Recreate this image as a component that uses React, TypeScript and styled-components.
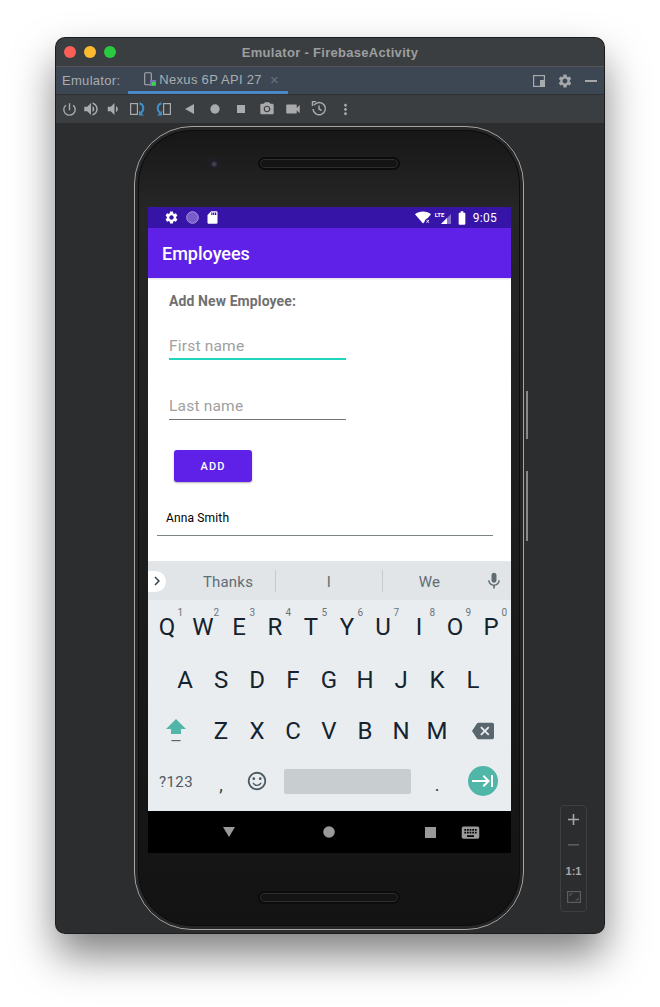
import React from 'react'
import styled, { createGlobalStyle } from 'styled-components'
import {
  MdBackspace,
  MdBatteryStd,
  MdCameraAlt,
  MdKeyboard,
  MdKeyboardTab,
  MdMic,
  MdMoreVert,
  MdPowerSettingsNew,
  MdSdCard,
  MdSettings,
  MdStop,
  MdVideocam,
  MdVolumeDown,
  MdVolumeUp,
  MdFiberManualRecord,
  MdOutlineSentimentSatisfied,
  MdChevronRight,
} from 'react-icons/md'

const GlobalStyle = createGlobalStyle`
  html, body {
    margin: 0;
    padding: 0;
    background: #ffffff;
  }
  body {
    font-family: Roboto, "Liberation Sans", sans-serif;
    overflow: hidden;
  }
`

const Page = styled.div`
  width: 660px;
  height: 1007px;
  padding: 38px 0 0 56px;
  box-sizing: border-box;
`

const EmulatorWindow = styled.div`
  width: 548px;
  height: 895px;
  border-radius: 9px;
  box-shadow: 0 0 0 1px #1c1c1c, 0 22px 42px rgba(0, 0, 0, 0.5);
  overflow: hidden;
  display: flex;
  flex-direction: column;
  background: #2c2d2f;
`

const TitleBar = styled.div`
  height: 28px;
  flex: none;
  background: #3b3e40;
  border-bottom: 1px solid #555757;
  display: flex;
  align-items: center;
  padding-left: 8px;
  position: relative;
`

const TrafficLight = styled.span<{ $color: string }>`
  width: 12px;
  height: 12px;
  border-radius: 50%;
  margin-right: 8px;
  background: ${(p) => p.$color};
`

const WindowTitle = styled.div`
  position: absolute;
  left: 0;
  right: 0;
  text-align: center;
  font-family: "Liberation Sans", sans-serif;
  font-size: 13px;
  font-weight: 700;
  letter-spacing: 0.3px;
  color: #9c9e9f;
`

const TabBar = styled.div`
  height: 27px;
  flex: none;
  background: #3c4753;
  border-bottom: 1px solid #2f3133;
  display: flex;
  align-items: center;
  padding-left: 6px;
  color: #a9adb1;
  font-family: "Liberation Sans", sans-serif;
  font-size: 13px;
  letter-spacing: 0.3px;
`

const Tab = styled.div`
  height: 27px;
  width: 160px;
  margin-left: 8px;
  box-sizing: border-box;
  border-bottom: 3px solid #4a88c7;
  display: flex;
  align-items: center;
  padding: 0 0 0 16px;
  gap: 3px;
`

const TabClose = styled.span`
  color: #6c7278;
  font-size: 15px;
  margin-left: 5px;
`

const TabActions = styled.div`
  margin-left: auto;
  display: flex;
  align-items: center;
  gap: 12px;
  padding-right: 7px;
  color: #a5a7a9;
`

const Toolbar = styled.div`
  height: 28px;
  flex: none;
  background: #3b3e40;
  display: flex;
  align-items: center;
  padding-left: 2px;
  color: #a8aaac;
`

const ToolSlot = styled.div<{ $w?: number }>`
  width: ${(p) => p.$w ?? 26}px;
  display: flex;
  justify-content: center;
  align-items: center;
`

const Stage = styled.div`
  flex: 1;
  position: relative;
  padding: 3px 0 0 78px;
  background: #2c2d2f;
`

const ZoomPanel = styled.div`
  position: absolute;
  left: 504px;
  top: 682px;
  width: 27px;
  height: 107px;
  box-sizing: border-box;
  border: 1px solid #3e3f41;
  border-radius: 4px;
  display: flex;
  flex-direction: column;
  align-items: center;
  color: #a8a8a8;
`

const ZoomItem = styled.div<{ $dim?: boolean }>`
  height: 26px;
  flex: none;
  display: flex;
  align-items: center;
  justify-content: center;
  color: ${(p) => (p.$dim ? '#5c5d5f' : '#a8a8a8')};
  font-family: "Liberation Sans", sans-serif;
  font-size: 11px;
  font-weight: 700;
`

const Phone = styled.div`
  position: relative;
  width: 390px;
  height: 804px;
  box-sizing: border-box;
  border-radius: 58px;
  border: 1px solid #a6a6a6;
  box-shadow: inset 0 0 0 3px #262626, inset 0 0 0 4px #0d0d0d;
  background: linear-gradient(180deg, #161616 0%, #262626 10%, #131313 100%);
  display: flex;
  flex-direction: column;
  align-items: center;
`

const SideButton = styled.div<{ $top: number; $height: number }>`
  position: absolute;
  right: -5px;
  top: ${(p) => p.$top}px;
  width: 2px;
  height: ${(p) => p.$height}px;
  background: #85878a;
`

const TopBezel = styled.div`
  width: 100%;
  height: 80px;
  flex: none;
  box-sizing: border-box;
  padding: 30px 0 0 72px;
  display: flex;
  align-items: flex-start;
`

const Camera = styled.div`
  width: 12px;
  height: 12px;
  margin-top: 0;
  border-radius: 50%;
  background: radial-gradient(circle at 60% 60%, #4a3d4c 0 12%, #1c1c26 35%, #222 100%);
`

const Speaker = styled.div<{ $offset?: number }>`
  width: 142px;
  height: 13px;
  margin-left: ${(p) => p.$offset ?? 0}px;
  box-sizing: border-box;
  border-radius: 7px;
  background: #141414;
  border: 2px solid #0c0c0c;
  box-shadow: inset 0 0 0 1px #2e2e2e;
`

const BottomBezel = styled.div`
  width: 100%;
  flex: 1;
  display: flex;
  justify-content: center;
  padding-top: 38px;
  box-sizing: border-box;
`

const Screen = styled.div`
  width: 363px;
  height: 646px;
  flex: none;
  margin-left: 1px;
  background: #ffffff;
  display: flex;
  flex-direction: column;
  overflow: hidden;
`

const StatusBar = styled.div`
  height: 21px;
  flex: none;
  background: #3614a7;
  color: #fff;
  display: flex;
  align-items: center;
  padding: 0 14px 0 16px;
`

const StatusIcon = styled.div<{ $mr?: number }>`
  display: flex;
  align-items: center;
  margin-right: ${(p) => p.$mr ?? 6}px;
`

const StatusRight = styled.div`
  margin-left: auto;
  display: flex;
  align-items: center;
`

const LteGroup = styled.div`
  position: relative;
  width: 16px;
  height: 13px;
  margin-right: 3px;
  display: flex;
  justify-content: flex-end;
  align-items: flex-end;
`

const LteLabel = styled.span`
  position: absolute;
  left: 0;
  top: 0;
  font-size: 6px;
  line-height: 7px;
  font-weight: 700;
`

const Clock = styled.span`
  font-size: 12px;
  margin-left: 3px;
  letter-spacing: 0.3px;
`

const AppBar = styled.div`
  height: 50px;
  flex: none;
  background: #5f21e8;
  color: #fff;
  display: flex;
  align-items: center;
  padding-left: 14px;
  font-size: 18px;
  font-weight: 500;
  box-shadow: 0 1px 2px rgba(0, 0, 0, 0.15);
  z-index: 1;
`

const Content = styled.div`
  height: 283px;
  flex: none;
  padding-left: 9px;
  box-sizing: border-box;
  overflow: hidden;
`

const FormHeading = styled.div`
  margin: 15px 0 0 12px;
  height: 16px;
  line-height: 16px;
  font-size: 14px;
  font-weight: 700;
  letter-spacing: 0.1px;
  color: #707070;
`

const Field = styled.div<{ $focused?: boolean }>`
  width: 177px;
  margin: ${(p) => (p.$focused ? 22 : 31)}px 0 0 12px;
  height: 29px;
  box-sizing: border-box;
  line-height: 31px;
  font-size: 15.5px;
  letter-spacing: 0.2px;
  color: #a0a0a0;
  border-bottom: ${(p) => (p.$focused ? '2px solid #1fd6bc' : '1px solid #747474')};
`

const AddButton = styled.button`
  display: block;
  width: 78px;
  height: 32px;
  margin: 30px 0 0 17px;
  padding: 0;
  border: 0;
  border-radius: 3px;
  background: #5f21e8;
  color: #fff;
  font-family: Roboto, sans-serif;
  font-size: 11px;
  font-weight: 500;
  letter-spacing: 1.1px;
  box-shadow: 0 1px 2px rgba(0, 0, 0, 0.3);
`

const EmployeeName = styled.div`
  margin: 28px 0 0 9px;
  height: 16px;
  line-height: 16px;
  font-size: 12px;
  letter-spacing: 0.15px;
  color: #000;
`

const Divider = styled.div`
  width: 336px;
  height: 1px;
  margin-top: 9px;
  background: #7d8488;
`

const Keyboard = styled.div`
  flex: 1;
  background: #e9edf0;
  display: flex;
  flex-direction: column;
  border-top: 1px solid #e4e6e8;
`

const Suggestions = styled.div`
  height: 38px;
  flex: none;
  background: #e1e5e8;
  display: flex;
  align-items: center;
  color: #5f6c74;
  font-size: 15px;
  letter-spacing: 0.2px;
`

const ExpandPill = styled.div`
  width: 18px;
  height: 21px;
  margin-right: 15px;
  background: #fff;
  border-radius: 0 11px 11px 0;
  display: flex;
  align-items: center;
  color: #3a454c;
`

const Suggestion = styled.div<{ $w: number; $divided?: boolean }>`
  width: ${(p) => p.$w}px;
  height: 22px;
  line-height: 24px;
  text-align: center;
  box-sizing: border-box;
  border-left: ${(p) => (p.$divided ? '1px solid #c4cace' : '0')};
`

const MicSlot = styled.div`
  width: 35px;
  display: flex;
  justify-content: center;
  color: #5f6c74;
`

const KeyRow = styled.div<{ $h: number; $pad?: number }>`
  height: ${(p) => p.$h}px;
  flex: none;
  display: flex;
  align-items: center;
  padding-left: ${(p) => p.$pad ?? 0}px;
`

const Key = styled.div<{ $w?: number }>`
  position: relative;
  width: ${(p) => p.$w ?? 36}px;
  height: 100%;
  flex: none;
  display: flex;
  align-items: center;
  justify-content: center;
  font-size: 24px;
  color: #14232e;
`

const KeyHint = styled.span`
  position: absolute;
  top: 8px;
  right: 2px;
  font-size: 10px;
  line-height: 10px;
  color: #6a747b;
`

const FnKey = styled(Key)`
  font-size: 15px;
  letter-spacing: 0.4px;
  color: #4d5a62;
`

const SymbolsLabel = styled.span`
  margin: 2px 0 0 1px;
`

const PunctKey = styled(Key)`
  font-size: 18px;
  padding-top: 6px;
  box-sizing: border-box;
  color: #2f3d46;
`

const SpaceBar = styled.div`
  width: 127px;
  height: 25px;
  flex: none;
  margin: 0 8px 0 9px;
  border-radius: 2px;
  background: #c8cdd0;
`

const EnterButton = styled.div`
  width: 30px;
  height: 30px;
  border-radius: 50%;
  background: #4fb6a8;
  color: #fff;
  display: flex;
  align-items: center;
  justify-content: center;
`

const NavBar = styled.div`
  flex: none;
  height: 42px;
  background: #000;
  display: flex;
  align-items: center;
  color: #9a9a9a;
`

const NavSlot = styled.div<{ $left: number }>`
  width: 24px;
  flex: none;
  margin-left: ${(p) => p.$left}px;
  display: flex;
  justify-content: center;
`

const firstRow: [string, string][] = [
  ['Q', '1'], ['W', '2'], ['E', '3'], ['R', '4'], ['T', '5'],
  ['Y', '6'], ['U', '7'], ['I', '8'], ['O', '9'], ['P', '0'],
]
const secondRow = 'ASDFGHJKL'.split('')
const thirdRow = 'ZXCVBNM'.split('')

const RotateIcon: React.FC<{ flip?: boolean }> = ({ flip }) => (
  <svg width="15" height="14" viewBox="0 0 15 14" style={flip ? { transform: 'scaleX(-1)' } : undefined}>
    <rect x="0.6" y="1.6" width="6.8" height="10.800" fill="none" stroke="#a8aaac" strokeWidth="1.2" />
    <path d="M9.500 1.300c4.500 1.200 5 6.500 1.500 9.500" fill="none" stroke="#3d8fc9" strokeWidth="2" />
    <path d="M9 8.500v5h5z" fill="#3d8fc9" />
  </svg>
)

const SnapshotIcon = () => (
  <svg width="16" height="16" viewBox="0 0 16 16" fill="none" stroke="#a8aaac" strokeWidth="1.5">
    <path d="M3 4.2A6.2 6.2 0 1 1 2 8" />
    <path d="M1 1.5h4.5V5" transform="rotate(-90 3 3)" />
    <path d="M8 4.5V8l2.5 1.5" />
  </svg>
)

const BackTriangle = () => (
  <svg width="12" height="12" viewBox="0 0 12 12">
    <path d="M0 1h12L6 11z" fill="currentColor" />
  </svg>
)

const HomeDot = () => (
  <svg width="12" height="12" viewBox="0 0 12 12">
    <circle cx="6" cy="6" r="5.800" fill="currentColor" />
  </svg>
)

const TabDeviceIcon = () => (
  <svg width="12" height="14" viewBox="0 0 12 14">
    <rect x="0.7" y="0.7" width="6.6" height="12" rx="1" fill="none" stroke="#a9adb1" strokeWidth="1.1" />
    <rect x="6" y="8" width="6" height="6" fill="#7b6fb5" />
    <rect x="8" y="10" width="3.5" height="3.5" fill="#30e040" />
  </svg>
)

const ShiftIcon = () => (
  <svg width="22" height="26" viewBox="0 0 22 26">
    <path d="M11 1l10 10h-5v5H6v-5H1z" fill="#4fb6a8" />
    <rect x="6.5" y="22" width="9" height="1.2" fill="#5a666e" />
  </svg>
)

const WifiOffIcon = () => (
  <svg width="16" height="13" viewBox="0 0 16 13">
    <path d="M0 3.2C2 1.6 5 .5 8 .5s6 1.1 8 2.7L8 12.5z" fill="#fff" />
    <path d="M10.6 8.6l3.4 3.4m0-3.4l-3.4 3.4" stroke="#3614a7" strokeWidth="3" />
    <path d="M11.5 9l2.4 2.8m0-2.8l-2.4 2.8" stroke="#fff" strokeWidth="0.9" />
  </svg>
)

const SignalIcon = () => (
  <svg width="10" height="10" viewBox="0 0 10 10">
    <path d="M0 10L10 0v10z" fill="#fff" opacity="0.4" />
    <path d="M0 10l6-6v6z" fill="#fff" />
  </svg>
)

const LoaderDot = () => (
  <svg width="13" height="13" viewBox="0 0 13 13">
    <circle cx="6.500" cy="6.500" r="5.800" fill="#7a5cc8" stroke="#a797dc" strokeWidth="1" />
  </svg>
)

const CompactIcon = () => (
  <svg width="12" height="12" viewBox="0 0 12 12">
    <rect x="0.6" y="0.6" width="10.800" height="10.800" fill="none" stroke="#a8aaac" strokeWidth="1.2" />
    <rect x="7" y="5" width="4.500" height="6.500" fill="#a8aaac" />
  </svg>
)

const FitIcon = () => (
  <svg width="14" height="12" viewBox="0 0 14 12" fill="none" stroke="#5c5d5f" strokeWidth="1">
    <rect x="0.5" y="0.5" width="13" height="11" strokeWidth="1.4" />
    <path d="M3 5V3h2.5M11 7v2H8.500" />
  </svg>
)

const App: React.FC<{}> = () => {
  return (
    <Page>
      <GlobalStyle />
      <EmulatorWindow>
        <TitleBar>
          <TrafficLight $color="#fb5f57" />
          <TrafficLight $color="#fcba2f" />
          <TrafficLight $color="#2ac940" />
          <WindowTitle>Emulator - FirebaseActivity</WindowTitle>
        </TitleBar>
        <TabBar>
          Emulator:
          <Tab>
            <TabDeviceIcon />
            Nexus 6P API 27
            <TabClose>×</TabClose>
          </Tab>
          <TabActions>
            <CompactIcon />
            <MdSettings size={16} />
            <svg width="12" height="2" viewBox="0 0 12 2"><rect width="12" height="2" fill="#a5a7a9" /></svg>
          </TabActions>
        </TabBar>
        <Toolbar>
          <ToolSlot $w={22}><MdPowerSettingsNew size={17} /></ToolSlot>
          <ToolSlot $w={22}><MdVolumeUp size={18} /></ToolSlot>
          <ToolSlot $w={22}><MdVolumeDown size={18} /></ToolSlot>
          <ToolSlot><RotateIcon /></ToolSlot>
          <ToolSlot><RotateIcon flip /></ToolSlot>
          <ToolSlot>
            <svg width="9" height="10" viewBox="0 0 9 10"><path d="M9 0v10L0 5z" fill="#a8aaac" /></svg>
          </ToolSlot>
          <ToolSlot><MdFiberManualRecord size={14} /></ToolSlot>
          <ToolSlot><MdStop size={16} /></ToolSlot>
          <ToolSlot><MdCameraAlt size={16} /></ToolSlot>
          <ToolSlot><MdVideocam size={18} /></ToolSlot>
          <ToolSlot><SnapshotIcon /></ToolSlot>
          <ToolSlot><MdMoreVert size={17} /></ToolSlot>
        </Toolbar>
        <Stage>
          <Phone>
            <SideButton $top={264} $height={48} />
            <SideButton $top={344} $height={70} />
            <TopBezel>
              <Camera />
              <Speaker $offset={39} />
            </TopBezel>
            <Screen>
              <StatusBar>
                <StatusIcon $mr={7}><MdSettings size={15} /></StatusIcon>
                <StatusIcon $mr={6}><LoaderDot /></StatusIcon>
                <StatusIcon><MdSdCard size={15} /></StatusIcon>
                <StatusRight>
                  <StatusIcon $mr={4}><WifiOffIcon /></StatusIcon>
                  <LteGroup>
                    <LteLabel>LTE</LteLabel>
                    <SignalIcon />
                  </LteGroup>
                  <StatusIcon $mr={0}><MdBatteryStd size={16} /></StatusIcon>
                  <Clock>9:05</Clock>
                </StatusRight>
              </StatusBar>
              <AppBar>Employees</AppBar>
              <Content>
                <FormHeading>Add New Employee:</FormHeading>
                <Field $focused>First name</Field>
                <Field>Last name</Field>
                <AddButton>ADD</AddButton>
                <EmployeeName>Anna Smith</EmployeeName>
                <Divider />
              </Content>
              <Keyboard>
                <Suggestions>
                  <ExpandPill><MdChevronRight size={18} /></ExpandPill>
                  <Suggestion $w={94}>Thanks</Suggestion>
                  <Suggestion $w={107} $divided>I</Suggestion>
                  <Suggestion $w={94} $divided>We</Suggestion>
                  <MicSlot><MdMic size={20} /></MicSlot>
                </Suggestions>
                <KeyRow $h={54} $pad={1}>
                  {firstRow.map(([letter, hint]) => (
                    <Key key={letter}>
                      {letter}
                      <KeyHint>{hint}</KeyHint>
                    </Key>
                  ))}
                </KeyRow>
                <KeyRow $h={52} $pad={19}>
                  {secondRow.map((letter) => (
                    <Key key={letter}>{letter}</Key>
                  ))}
                </KeyRow>
                <KeyRow $h={50}>
                  <FnKey $w={55}><ShiftIcon /></FnKey>
                  {thirdRow.map((letter) => (
                    <Key key={letter}>{letter}</Key>
                  ))}
                  <FnKey $w={56}><MdBackspace size={22} color="#5a666e" /></FnKey>
                </KeyRow>
                <KeyRow $h={50}>
                  <FnKey $w={55}><SymbolsLabel>?123</SymbolsLabel></FnKey>
                  <PunctKey>,</PunctKey>
                  <FnKey><MdOutlineSentimentSatisfied size={22} /></FnKey>
                  <SpaceBar />
                  <PunctKey>.</PunctKey>
                  <FnKey $w={56}>
                    <EnterButton><MdKeyboardTab size={24} /></EnterButton>
                  </FnKey>
                </KeyRow>
              </Keyboard>
              <NavBar>
                <NavSlot $left={69}><BackTriangle /></NavSlot>
                <NavSlot $left={76}><HomeDot /></NavSlot>
                <NavSlot $left={77}>
                  <svg width="11" height="11" viewBox="0 0 11 11"><rect width="11" height="11" fill="currentColor" /></svg>
                </NavSlot>
                <NavSlot $left={16}><MdKeyboard size={21} /></NavSlot>
              </NavBar>
            </Screen>
            <BottomBezel>
              <Speaker />
            </BottomBezel>
          </Phone>
          <ZoomPanel>
            <ZoomItem>
              <svg width="11" height="11" viewBox="0 0 11 11"><path d="M5.500 0v11M0 5.500h11" stroke="#a8a8a8" strokeWidth="1.6" /></svg>
            </ZoomItem>
            <ZoomItem $dim>
              <svg width="11" height="2" viewBox="0 0 11 2"><rect width="11" height="1.600" fill="#5c5d5f" /></svg>
            </ZoomItem>
            <ZoomItem>1:1</ZoomItem>
            <ZoomItem $dim><FitIcon /></ZoomItem>
          </ZoomPanel>
        </Stage>
      </EmulatorWindow>
    </Page>
  )
}

export default App
